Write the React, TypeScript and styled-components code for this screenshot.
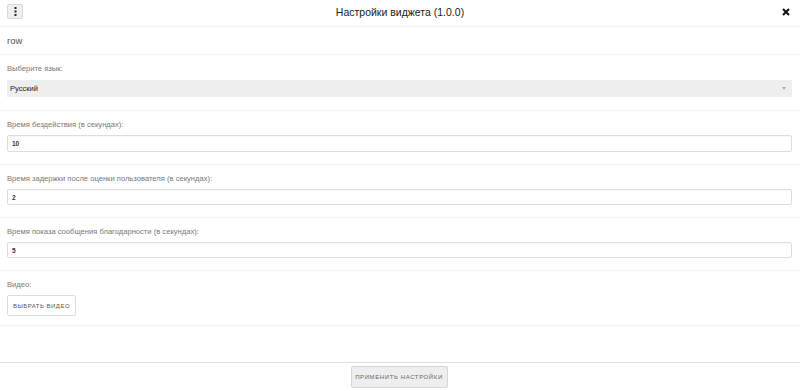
import React from "react";
import styled, { createGlobalStyle } from "styled-components";

const Global = createGlobalStyle`
  html, body { margin: 0; padding: 0; background: #fff; }
  body { font-family: "Liberation Sans", Arial, sans-serif; }
  * { box-sizing: border-box; }
`;

const Page = styled.div`
  width: 800px;
  height: 391px;
  display: flex;
  flex-direction: column;
  background: #fff;
  overflow: hidden;
`;

const Header = styled.div`
  height: 27px;
  flex-shrink: 0;
  display: flex;
  align-items: center;
  justify-content: space-between;
  padding: 0 9px 0 7px;
  border-bottom: 1px solid #f3f3f3;
  position: relative;
`;

const MenuButton = styled.button`
  width: 16px;
  height: 15px;
  padding: 0;
  display: flex;
  align-items: center;
  justify-content: center;
  background: #f0f0f0;
  border: 1px solid #d8d8d8;
  border-radius: 2px;
  margin-top: -3px;
`;

const Title = styled.div`
  position: absolute;
  left: 0;
  right: 0;
  top: 6px;
  text-align: center;
  font-size: 10.5px;
  line-height: 12px;
  color: #222;
  pointer-events: none;
`;

const CloseButton = styled.button`
  width: 10px;
  height: 10px;
  padding: 0;
  border: 0;
  background: transparent;
  display: flex;
  align-items: center;
  justify-content: center;
  margin-top: -3px;
`;

const Section = styled.div<{ $pt?: number; $pb?: number }>`
  flex-shrink: 0;
  display: flex;
  flex-direction: column;
  padding: ${(p) => p.$pt ?? 9}px 8px ${(p) => p.$pb ?? 12}px 7px;
  border-bottom: 1px solid #f3f3f3;
`;

const RowSection = styled.div`
  height: 28px;
  flex-shrink: 0;
  display: flex;
  align-items: center;
  padding: 0 7px;
  font-size: 9.5px;
  color: #555;
  border-bottom: 1px solid #f3f3f3;
`;

const Label = styled.div<{ $gap?: number }>`
  font-size: 7.6px;
  line-height: 10px;
  color: #777;
  margin-bottom: ${(p) => p.$gap ?? 5}px;
`;

const SelectBox = styled.div`
  height: 17px;
  background: #eee;
  display: flex;
  align-items: center;
  justify-content: space-between;
  padding: 0 6px 0 3px;
  font-size: 7.5px;
  color: #222;
`;

const Caret = styled.span`
  width: 0;
  height: 0;
  border-left: 2.5px solid transparent;
  border-right: 2.5px solid transparent;
  border-top: 3px solid #aaa;
`;

const Input = styled.div<{ $h?: number }>`
  height: ${(p) => p.$h ?? 16}px;
  border: 1px solid #ddd;
  border-radius: 2px;
  display: flex;
  align-items: center;
  padding: 0 4px;
  font-size: 6.5px;
  font-weight: bold;
  color: #333;
  box-shadow: inset 0 1px 1px rgba(0, 0, 0, 0.03);
`;

const SmallButton = styled.button`
  align-self: flex-start;
  height: 21px;
  width: 69px;
  background: #fff;
  border: 1px solid #ddd;
  border-radius: 2px;
  font-family: "Liberation Sans", Arial, sans-serif;
  font-size: 6px;
  letter-spacing: 0.5px;
  color: #555;
  text-transform: uppercase;
  padding: 0;
`;

const Spacer = styled.div`
  flex: 1;
`;

const Footer = styled.div`
  height: 29px;
  flex-shrink: 0;
  border-top: 1px solid #ddd;
  display: flex;
  justify-content: center;
  padding-top: 3px;
`;

const ApplyButton = styled.button`
  width: 97px;
  height: 22px;
  background: #eee;
  border: 1px solid #d6d6d6;
  border-radius: 2px;
  font-family: "Liberation Sans", Arial, sans-serif;
  font-size: 6px;
  letter-spacing: 0.6px;
  color: #666;
  text-transform: uppercase;
  padding: 0;
  margin-left: -2px;
`;

export default function App() {
  return (
    <>
      <Global />
      <Page>
        <Header>
          <MenuButton>
            <svg width="3" height="9" viewBox="0 0 3 9">
              <rect x="0.5" y="0" width="2" height="2" fill="#222" />
              <rect x="0.5" y="3.5" width="2" height="2" fill="#222" />
              <rect x="0.5" y="7" width="2" height="2" fill="#222" />
            </svg>
          </MenuButton>
          <Title>Настройки виджета (1.0.0)</Title>
          <CloseButton>
            <svg width="8" height="8" viewBox="0 0 8 8">
              <path d="M1 1 L7 7 M7 1 L1 7" stroke="#111" strokeWidth="2" />
            </svg>
          </CloseButton>
        </Header>
        <RowSection>row</RowSection>
        <Section $pt={9} $pb={13}>
          <Label $gap={6}>Выберите язык:</Label>
          <SelectBox>
            <span>Русский</span>
            <Caret />
          </SelectBox>
        </Section>
        <Section>
          <Label>Время бездействия (в секундах):</Label>
          <Input $h={17}>10</Input>
        </Section>
        <Section>
          <Label>Время задержки после оценки пользователя (в секундах):</Label>
          <Input>2</Input>
        </Section>
        <Section>
          <Label>Время показа сообщения благодарности (в секундах):</Label>
          <Input>5</Input>
        </Section>
        <Section $pb={9}>
          <Label>Видео:</Label>
          <SmallButton>Выбрать видео</SmallButton>
        </Section>
        <Spacer />
        <Footer>
          <ApplyButton>Применить настройки</ApplyButton>
        </Footer>
      </Page>
    </>
  );
}
